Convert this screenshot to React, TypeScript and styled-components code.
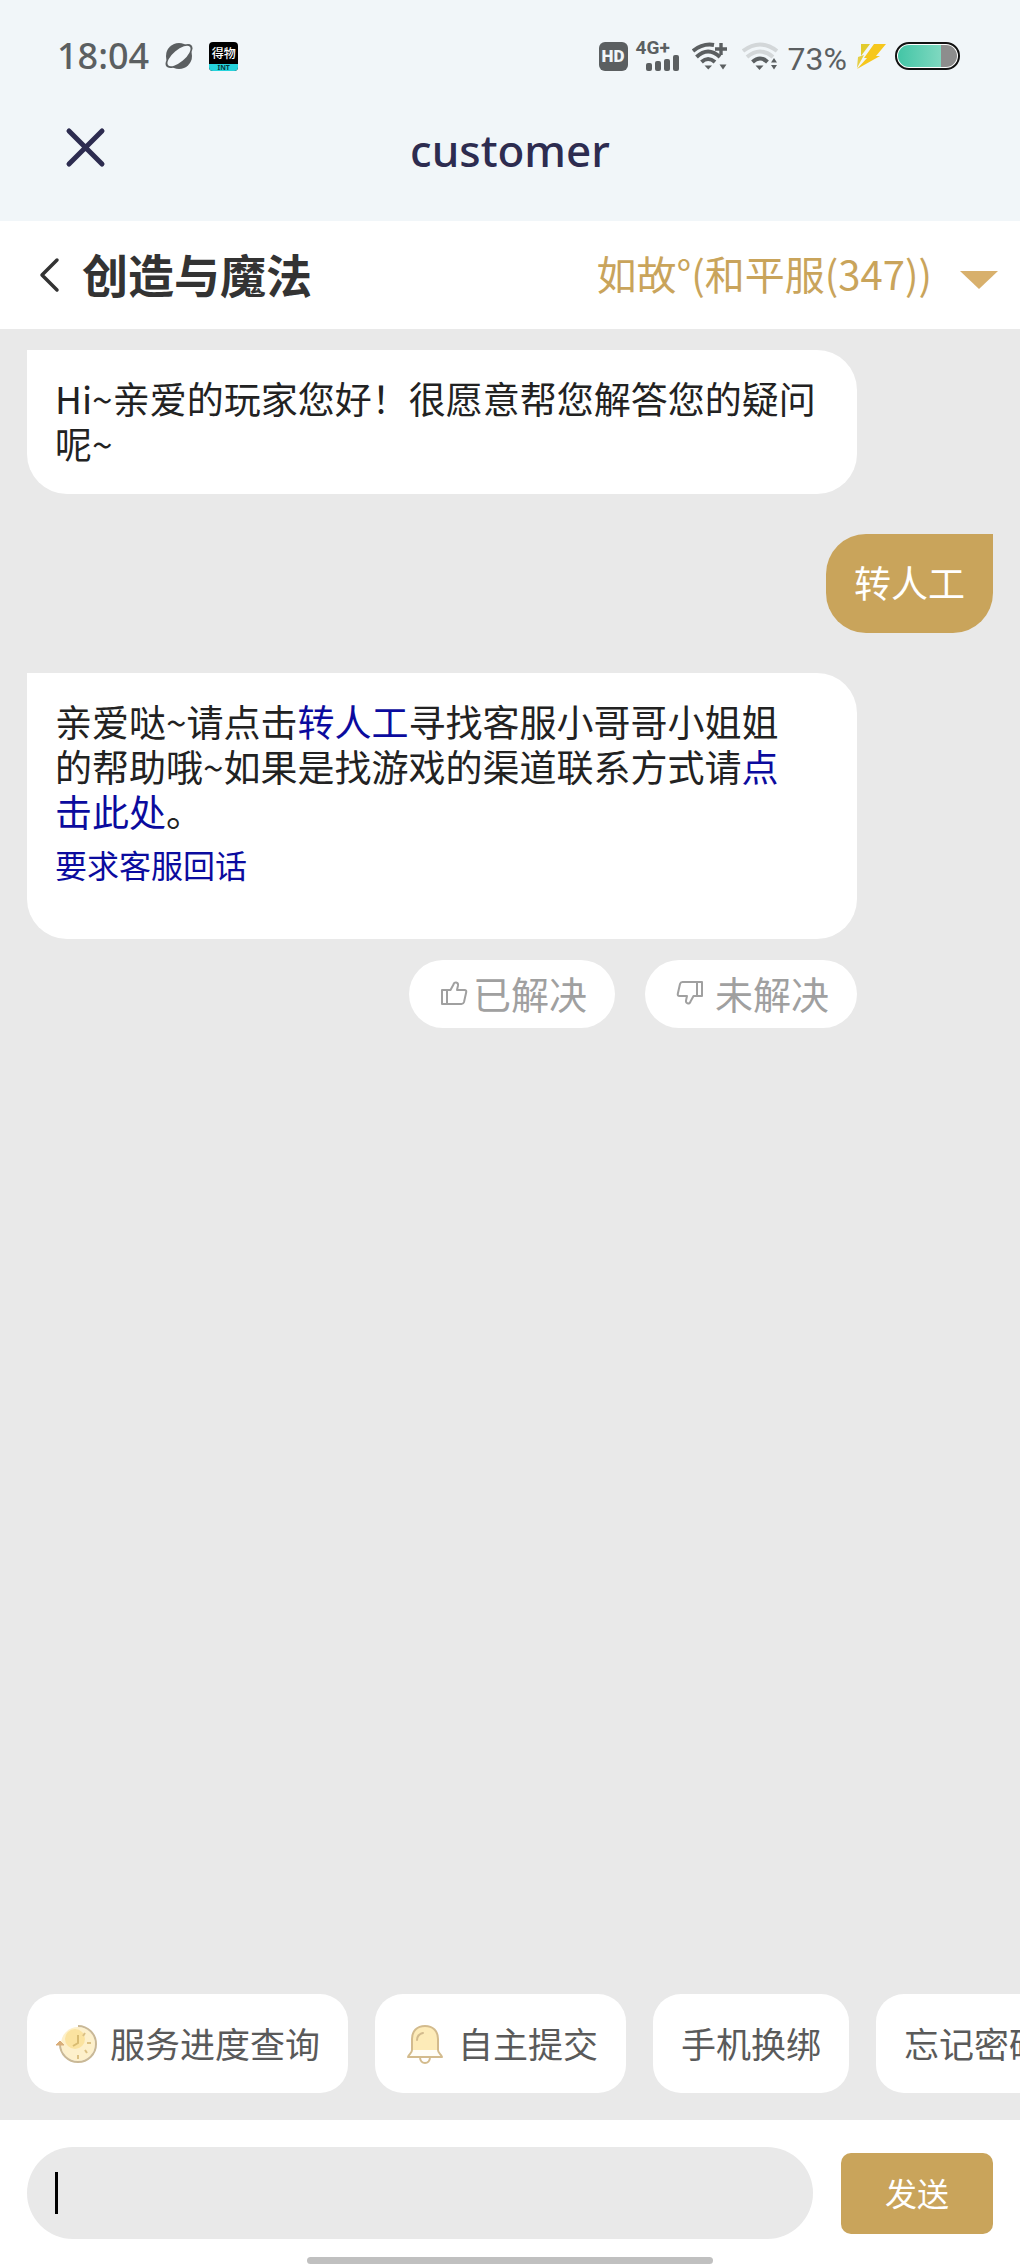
import React, { useState } from "react";
import styled, { createGlobalStyle } from "styled-components";

const CJK = `"Noto Sans CJK SC", "Noto Sans", sans-serif`;
const LATIN = `"Noto Sans", "Noto Sans CJK SC", sans-serif`;
const GOLD = "#c9a45b";
const GREY = "#e9e9e9";
const STATUS = "#5b5f61";

const GlobalStyle = createGlobalStyle`
  *, *::before, *::after { box-sizing: border-box; }
  body { margin: 0; background: ${GREY}; font-family: ${CJK}; }
  button, input { font: inherit; color: inherit; border: 0; margin: 0; padding: 0; }
  button { cursor: pointer; background: none; }
  svg { display: block; flex: none; }
`;

const Screen = styled.div`
  min-height: 100vh;
  display: flex;
  flex-direction: column;
  overflow-x: hidden;
`;

const TopArea = styled.header`
  background: #f1f6f9;
`;

const StatusBar = styled.div`
  display: flex;
  align-items: center;
  justify-content: space-between;
  height: 80px;
  padding: 32px 60px 0 57px;
  color: ${STATUS};
  font-family: ${LATIN};
`;

const StatusGroup = styled.div<{ $gap: number }>`
  display: flex;
  align-items: center;
  gap: ${(p) => p.$gap}px;
`;

const Clock = styled.time`
  font-size: 36px;
  font-weight: 500;
  line-height: 48px;
`;

const AppBadge = styled.span`
  display: flex;
  flex-direction: column;
  width: 29px;
  height: 29px;
  border-radius: 4px;
  overflow: hidden;
  background: #000;
  color: #fff;
  text-align: center;
  font: 500 12px/22px ${CJK};
`;

const AppBadgeFoot = styled.span`
  height: 7px;
  background: #25d3dc;
  color: #06383b;
  font: 700 7px/7px ${LATIN};
`;

const HdBadge = styled.span`
  width: 29px;
  height: 29px;
  border-radius: 6px;
  background: ${STATUS};
  color: #f1f6f9;
  text-align: center;
  font: 900 17px/29px Roboto, sans-serif;
`;

const Network = styled.span`
  display: flex;
  flex-direction: column;
  width: 48px;
  height: 30px;
  font: 700 19px/14px Roboto, sans-serif;
`;

const BatteryText = styled.span`
  font: 400 32px/36px Roboto, sans-serif;
  padding-top: 6px;
`;

const NavBar = styled.div`
  display: grid;
  grid-template-columns: 1fr auto 1fr;
  align-items: center;
  height: 141px;
  padding: 0 60px 2px;
`;

const CloseButton = styled.button`
  justify-self: start;
  padding-bottom: 6px;
`;

const NavTitle = styled.h1`
  margin: 0;
  color: #2d2c50;
  font: 500 44px/60px ${LATIN};
`;

const GameBar = styled.div`
  display: flex;
  align-items: center;
  justify-content: space-between;
  height: 108px;
  padding: 0 22px 5px 36px;
  background: #fff;
`;

const BackButton = styled.button`
  display: flex;
  align-items: center;
  gap: 20px;
  color: #333;
  font-size: 46px;
  font-weight: 700;
  line-height: 60px;
`;

const RoleButton = styled.button`
  display: flex;
  align-items: center;
  gap: 28px;
  color: ${GOLD};
  font-size: 40px;
  line-height: 60px;
`;

const Chat = styled.main`
  flex: 1;
  display: flex;
  flex-direction: column;
  gap: 40px;
  padding: 21px 27px 40px;
  background: ${GREY};
`;

const Message = styled.article`
  margin-right: 136px;
  padding: 26px 28px 28px;
  border-radius: 0 40px 40px 40px;
  background: #fff;
  color: #222;
  font-size: 37px;
  line-height: 45px;
`;

const Reply = styled(Message)`
  align-self: flex-end;
  margin-right: 0;
  border-radius: 40px 0 40px 40px;
  background: ${GOLD};
  color: #fff;
`;

const Paragraph = styled.p<{ $inset?: number }>`
  margin: 0;
  padding-right: ${(p) => p.$inset ?? 0}px;
`;

const Link = styled.a`
  color: #0b0b9e;
  text-decoration: none;
`;

const FollowUp = styled.p`
  margin: 8px 0 24px;
  font-size: 32px;
`;

const Answer = styled.div`
  display: flex;
  flex-direction: column;
  gap: 21px;
`;

const Feedback = styled.div`
  display: flex;
  justify-content: flex-end;
  gap: 30px;
  margin-right: 136px;
`;

const FeedbackButton = styled.button<{ $gap: number }>`
  display: flex;
  align-items: center;
  gap: ${(p) => p.$gap}px;
  height: 68px;
  padding: 0 28px 2px 30px;
  border-radius: 34px;
  background: #fff;
  color: #a0a0a0;
  font-size: 38px;
  line-height: 48px;
`;

const Shortcuts = styled.nav`
  display: flex;
  gap: 27px;
  padding: 0 27px 27px;
  overflow: hidden;
  background: ${GREY};
`;

const Chip = styled.button`
  flex: none;
  display: flex;
  align-items: center;
  gap: 11px;
  height: 99px;
  padding: 0 28px 2px;
  border-radius: 28px;
  background: #fff;
  color: #5a5a5a;
  font-size: 35px;
  line-height: 48px;
`;

const Footer = styled.footer`
  display: flex;
  flex-direction: column;
  gap: 18px;
  padding: 27px 27px 3px;
  background: #fff;
`;

const Composer = styled.form`
  display: flex;
  align-items: center;
  gap: 28px;
`;

const Field = styled.label`
  position: relative;
  flex: 1;
  display: flex;
`;

const TextInput = styled.input`
  width: 100%;
  height: 92px;
  padding: 0 28px;
  border-radius: 46px;
  outline: none;
  background: ${GREY};
  color: #222;
  font-size: 37px;
`;

const Caret = styled.span`
  position: absolute;
  left: 28px;
  top: 25px;
  width: 3px;
  height: 42px;
  background: #000;
`;

const SendButton = styled.button`
  width: 152px;
  height: 81px;
  padding-bottom: 2px;
  border-radius: 10px;
  background: ${GOLD};
  color: #fff;
  font-size: 32px;
`;

const HomeIndicator = styled.div`
  align-self: center;
  width: 42%;
  height: 7px;
  border-radius: 4px;
  background: #c0c0c0;
`;

const PlanetIcon = () => (
  <svg width="30" height="28" viewBox="0 0 30 28" aria-hidden="true">
    <circle cx="15" cy="14" r="13" fill={STATUS} />
    <ellipse cx="15" cy="14" rx="16.4" ry="7.4" transform="rotate(-40 15 14)" fill={STATUS} />
    <ellipse cx="15" cy="14" rx="14.2" ry="6" transform="rotate(-40 15 14)" fill="#f1f6f9" />
  </svg>
);

const SignalBars = () => (
  <svg width="48" height="16" viewBox="0 0 48 16" fill={STATUS} aria-hidden="true">
    <rect x="10" y="8" width="6" height="8" rx="2" />
    <rect x="19" y="6" width="6" height="10" rx="2" />
    <rect x="28" y="4" width="6" height="12" rx="2" />
    <rect x="37" y="0" width="6" height="16" rx="2" />
  </svg>
);

const WifiPlusIcon = () => (
  <svg width="42" height="28" viewBox="0 0 42 28" fill="none" stroke={STATUS} strokeWidth="4" aria-hidden="true">
    <path d="M1 9 Q11 1 22 3" />
    <path d="M4.500 15 Q16 4 28 15" />
    <path d="M9.500 20 Q16 14 23 20" />
    <path d="M12.500 23.500 h7.500 l-3.700 4z" fill={STATUS} stroke="none" />
    <path d="M29 1v12M23 7h12" strokeWidth="3.400" />
    <path d="M27.500 22.500h7l-3.500 5z" fill={STATUS} stroke="none" />
  </svg>
);

const WifiIcon = () => (
  <svg width="38" height="28" viewBox="0 0 38 28" fill="none" strokeWidth="4" aria-hidden="true">
    <path d="M1 9 Q18 -4 35 9" stroke="#d3d7d9" />
    <path d="M5 15 Q18 4 31 15" stroke="#d3d7d9" />
    <path d="M10.500 20 Q18 13 25.500 20" stroke={STATUS} />
    <path d="M13.500 23.500h8l-4 4.500z" fill={STATUS} />
    <path d="M29 20.500h6l-3-4.500zM29 23h6l-3 4.500z" fill={STATUS} />
  </svg>
);

const BoltIcon = () => (
  <svg width="32" height="28" viewBox="0 0 32 28" aria-hidden="true">
    <path d="M6 2h9L6 14z" fill="#e2cb2e" />
    <path d="M19 2h12L21 14h4L2 27l10-11H9z" fill="#f6c71d" />
    <path d="M3 15l6-2-7 13z" fill="#e5cf45" />
  </svg>
);

const BatteryIcon = () => (
  <svg width="65" height="28" viewBox="0 0 65 28" aria-hidden="true">
    <defs>
      <linearGradient id="charge">
        <stop offset="0" stopColor="#3fc4a4" />
        <stop offset="1" stopColor="#7fd8c0" />
      </linearGradient>
      <clipPath id="cell">
        <rect x="3" y="3" width="59" height="22" rx="11" />
      </clipPath>
    </defs>
    <rect x="1" y="1" width="63" height="26" rx="13" fill="#fff" stroke="#111" strokeWidth="2" />
    <g clipPath="url(#cell)">
      <rect x="0" y="0" width="46" height="28" fill="url(#charge)" />
      <rect x="46" y="0" width="19" height="28" fill="#8d8d8d" />
    </g>
  </svg>
);

const CloseIcon = () => (
  <svg width="50" height="44" viewBox="0 0 50 44" aria-hidden="true">
    <path d="M9 6l33 33M42 6L9 39" stroke="#2d2c50" strokeWidth="5" strokeLinecap="round" />
  </svg>
);

const BackIcon = () => (
  <svg width="26" height="40" viewBox="0 0 26 40" fill="none" aria-hidden="true">
    <path d="M21 7L6 22l15 15" stroke="#333" strokeWidth="3.500" strokeLinecap="round" strokeLinejoin="round" />
  </svg>
);

const DownIcon = () => (
  <svg width="38" height="32" viewBox="0 0 38 32" aria-hidden="true">
    <path d="M0 14h38L19 32z" fill="#d8b06c" />
  </svg>
);

const ThumbIcon = ({ down = false }: { down?: boolean }) => (
  <svg width="30" height="30" viewBox="0 0 30 30" fill="none" stroke="#a0a0a0" strokeWidth="2" strokeLinejoin="round" aria-hidden="true">
    <g transform={down ? "rotate(180 15 15)" : undefined}>
      <path d="M3 12h5v14H3zM8 12h3.500l3-5.500c.5-3 5-2.500 4.500 1L18 12h7.500c1.500 0 2 1 1.700 2.300L25 24c-.4 1.400-1 2-2.500 2H8" />
    </g>
  </svg>
);

const ClockIcon = () => (
  <svg width="44" height="44" viewBox="0 0 44 44" fill="none" aria-hidden="true">
    <circle cx="23" cy="23" r="17" fill="#fdf0cb" />
    <circle cx="20" cy="18" r="10" fill="#fbe3a0" />
    <path d="M23 5a18 18 0 1 1-18 18" stroke="#c9b896" strokeWidth="2" />
    <path d="M1 24l4-4 4 4z" fill="#d9ae7a" stroke="#d9ae7a" />
    <path d="M23 14v8l-5 3" stroke="#d9bc72" strokeWidth="2" />
    <path d="M30 12l-2 3M36 22h-4M32 32l-2-3M23 38v-4" stroke="#dcc184" strokeWidth="2" />
  </svg>
);

const BellIcon = () => (
  <svg width="44" height="44" viewBox="0 0 44 44" fill="none" stroke="#d3bb8d" strokeWidth="2" strokeLinejoin="round" aria-hidden="true">
    <path d="M9 31V18C9 10 14 5 22 5s13 5 13 13v13" fill="#fdebb8" />
    <path d="M9 29c0 3-3 4-4 7h34c-1-3-4-4-4-7" fill="#fffdf6" />
    <path d="M17 36c0 8 10 8 10 0" />
    <path d="M14 19c0-3 2-6 6-7" strokeLinecap="round" />
  </svg>
);

export default function App() {
  const [text, setText] = useState("");

  return (
    <Screen>
      <GlobalStyle />
      <TopArea>
        <StatusBar>
          <StatusGroup $gap={15}>
            <Clock>18:04</Clock>
            <PlanetIcon />
            <AppBadge>
              得物
              <AppBadgeFoot>INT</AppBadgeFoot>
            </AppBadge>
          </StatusGroup>
          <StatusGroup $gap={8}>
            <HdBadge>HD</HdBadge>
            <Network>
              4G+
              <SignalBars />
            </Network>
            <WifiPlusIcon />
            <WifiIcon />
            <BatteryText>73%</BatteryText>
            <BoltIcon />
            <BatteryIcon />
          </StatusGroup>
        </StatusBar>
        <NavBar>
          <CloseButton type="button" aria-label="关闭">
            <CloseIcon />
          </CloseButton>
          <NavTitle>customer</NavTitle>
        </NavBar>
      </TopArea>

      <GameBar>
        <BackButton type="button">
          <BackIcon />
          创造与魔法
        </BackButton>
        <RoleButton type="button">
          如故°(和平服(347))
          <DownIcon />
        </RoleButton>
      </GameBar>

      <Chat>
        <Message>
          <Paragraph>Hi~亲爱的玩家您好！很愿意帮您解答您的疑问呢~</Paragraph>
        </Message>
        <Reply>
          <Paragraph>转人工</Paragraph>
        </Reply>
        <Answer>
          <Message>
            <Paragraph $inset={28}>
              亲爱哒~请点击<Link href="#agent">转人工</Link>寻找客服小哥哥小姐姐的帮助哦~如果是找游戏的渠道联系方式请
              <Link href="#channel">点击此处</Link>。
            </Paragraph>
            <FollowUp>
              <Link href="#callback">要求客服回话</Link>
            </FollowUp>
          </Message>
          <Feedback>
            <FeedbackButton type="button" $gap={4}>
              <ThumbIcon />
              已解决
            </FeedbackButton>
            <FeedbackButton type="button" $gap={10}>
              <ThumbIcon down />
              未解决
            </FeedbackButton>
          </Feedback>
        </Answer>
      </Chat>

      <Shortcuts>
        <Chip type="button">
          <ClockIcon />
          服务进度查询
        </Chip>
        <Chip type="button">
          <BellIcon />
          自主提交
        </Chip>
        <Chip type="button">手机换绑</Chip>
        <Chip type="button">忘记密码</Chip>
      </Shortcuts>

      <Footer>
        <Composer onSubmit={(e) => e.preventDefault()}>
          <Field>
            <TextInput
              type="text"
              aria-label="输入消息"
              value={text}
              onChange={(e) => setText(e.target.value)}
            />
            {text === "" && <Caret />}
          </Field>
          <SendButton type="submit">发送</SendButton>
        </Composer>
        <HomeIndicator />
      </Footer>
    </Screen>
  );
}
